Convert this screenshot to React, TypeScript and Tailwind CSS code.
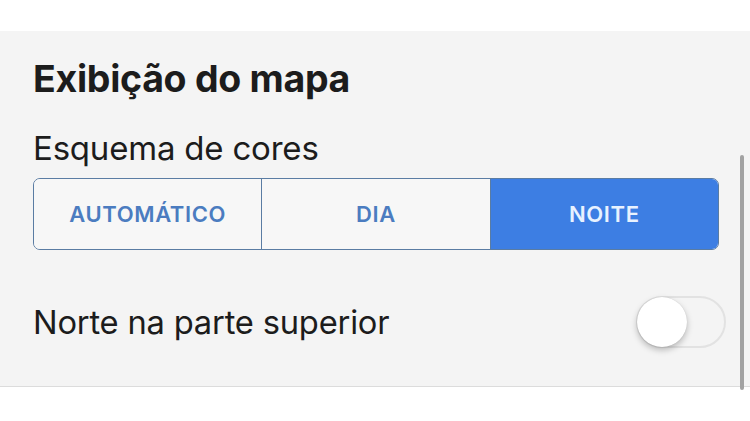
export default function App() {
  const options = ["AUTOMÁTICO", "DIA", "NOITE"];
  const selected = "NOITE";

  return (
    <div
      className="relative h-[421px] w-[750px] overflow-hidden bg-white"
      style={{ fontFamily: "Inter, 'Noto Sans', sans-serif" }}
    >
      <div className="h-[31px]" />
      <div className="flex h-[356px] flex-col border-b border-[#dcdcdc] bg-[#f4f4f4] pl-[33px] pr-[32px]">
        {/* Section title */}
        <h2 className="mt-[26px] text-[37.5px] font-bold leading-[44px] tracking-[-0.3px] text-[#1c1c1c]">
          Exibição do mapa
        </h2>
        <div className="mt-[29px] text-[33px] leading-[36px] tracking-[-0.2px] text-[#1c1c1c]">
          Esquema de cores
        </div>

        {/* Segmented control */}
        <div className="mt-[12px] flex h-[72px] w-[686px] overflow-hidden rounded-[7px] border-[1.5px] border-[#5a7ca3]">
          {options.map((opt, i) => {
            const active = opt === selected;
            return (
              <div
                key={opt}
                className={`flex flex-1 items-center justify-center text-[22px] font-semibold tracking-[0.6px] ${
                  i > 0 ? "border-l-[1.5px] border-[#5a7ca3]" : ""
                } ${active ? "bg-[#3d7ee3] text-[#e8f2ff]" : "bg-[#f7f7f7] text-[#4b7cc0]"}`}
              >
                {opt}
              </div>
            );
          })}
        </div>

        {/* Toggle row */}
        <div className="mt-[46px] flex items-center justify-between">
          <span className="text-[32.7px] leading-[40px] tracking-[-0.2px] text-[#1c1c1c]">
            Norte na parte superior
          </span>
          <div className="relative mr-[-8px] h-[52px] w-[90px] rounded-full border-[2.5px] border-[#e2e2e2] bg-[#f4f4f4]">
            <div className="absolute left-[-1px] top-[-1px] h-[50px] w-[50px] rounded-full bg-white shadow-[0_3px_6px_rgba(0,0,0,0.25),0_0_1px_rgba(0,0,0,0.15)]" />
          </div>
        </div>
      </div>

      {/* Scrollbar */}
      <div className="absolute left-[740px] top-[155px] h-[235px] w-[4px] rounded-full bg-[#a2a2a2]" />
    </div>
  );
}
